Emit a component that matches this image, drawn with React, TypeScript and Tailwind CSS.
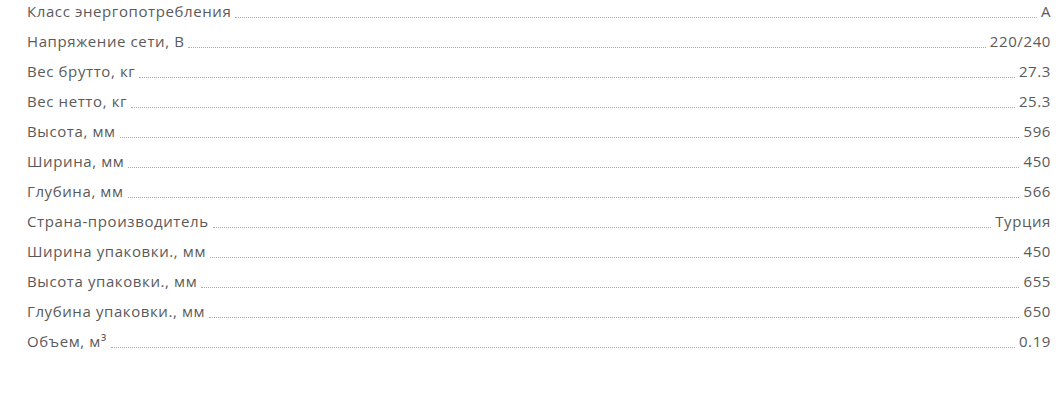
const specs: [string, string][] = [
  ["Класс энергопотребления", "A"],
  ["Напряжение сети, В", "220/240"],
  ["Вес брутто, кг", "27.3"],
  ["Вес нетто, кг", "25.3"],
  ["Высота, мм", "596"],
  ["Ширина, мм", "450"],
  ["Глубина, мм", "566"],
  ["Страна-производитель", "Турция"],
  ["Ширина упаковки., мм", "450"],
  ["Высота упаковки., мм", "655"],
  ["Глубина упаковки., мм", "650"],
  ["Объем, м³", "0.19"],
];

export default function App() {
  return (
    <div className="w-[1064px] h-[401px] bg-white pl-[27px] pr-[13px] font-['Open_Sans',sans-serif] text-[15px] tracking-[0.6px] text-[#5a5a5a]">
      {specs.map(([label, value], i) => (
        <div key={i} className="flex items-end h-[30px] pb-[9px] leading-[20px]">
          <span className="whitespace-nowrap">{label}</span>
          <span className="flex-1 mx-[4px] mb-[3px] border-b border-dotted border-[#aaa]" />
          <span className="whitespace-nowrap">{value}</span>
        </div>
      ))}
    </div>
  );
}
